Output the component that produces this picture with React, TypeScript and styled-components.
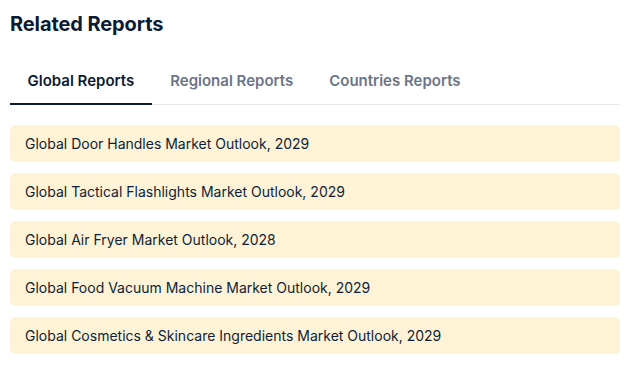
import styled, { createGlobalStyle } from "styled-components";
import { useState } from "react";

const GlobalStyle = createGlobalStyle`
    body {
        margin: 0;
        background: #ffffff;
        font-family: Inter, "Noto Sans", sans-serif;
    }
`;

const Container = styled.section`
    padding: 12px 11px 0 10px;
`;

const Title = styled.h2`
    margin: 0;
    font-size: 20px;
    font-weight: 700;
    line-height: 24px;
    color: #0b1b33;
    letter-spacing: -0.1px;
`;

const TabBar = styled.div`
    display: flex;
    gap: 1px;
    margin-top: 28px;
    border-bottom: 1px solid #e6e8eb;
`;

const Tab = styled.button<{ $active?: boolean }>`
    border: none;
    background: none;
    font-family: inherit;
    font-size: 15px;
    font-weight: 600;
    line-height: 20px;
    padding: 7px 17.5px 12px;
    margin-bottom: -1px;
    cursor: pointer;
    color: ${(p) => (p.$active ? "#0b1b33" : "#6b7587")};
    border-bottom: 2px solid ${(p) => (p.$active ? "#0b1b33" : "transparent")};
`;

const List = styled.ul`
    list-style: none;
    margin: 20px 0 0;
    padding: 0;
    display: flex;
    flex-direction: column;
    gap: 11px;
`;

const Item = styled.li`
    background: #fef3d6;
    border-radius: 5px;
    height: 37px;
    display: flex;
    align-items: center;
    padding: 0 15px;
    font-size: 14px;
    color: #0f1e36;
`;

const tabs = ["Global Reports", "Regional Reports", "Countries Reports"];

const reports = [
    "Global Door Handles Market Outlook, 2029",
    "Global Tactical Flashlights Market Outlook, 2029",
    "Global Air Fryer Market Outlook, 2028",
    "Global Food Vacuum Machine Market Outlook, 2029",
    "Global Cosmetics & Skincare Ingredients Market Outlook, 2029",
];

function App() {
    const [active, setActive] = useState(0);
    return (
        <Container>
            <GlobalStyle />
            <Title>Related Reports</Title>
            <TabBar>
                {tabs.map((t, i) => (
                    <Tab key={t} $active={i === active} onClick={() => setActive(i)}>
                        {t}
                    </Tab>
                ))}
            </TabBar>
            <List>
                {reports.map((r) => (
                    <Item key={r}>{r}</Item>
                ))}
            </List>
        </Container>
    );
}

export default App;
